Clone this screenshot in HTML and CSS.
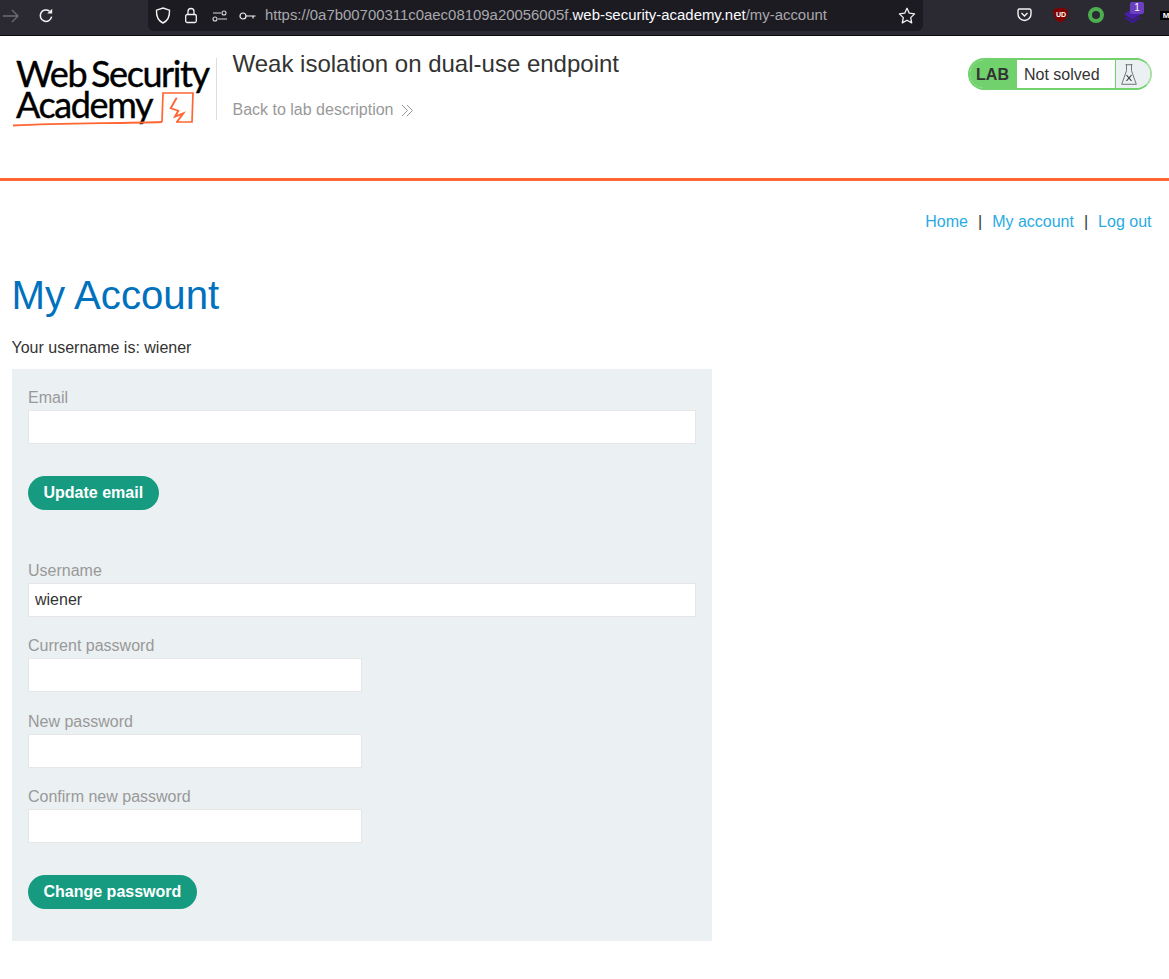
FILE: index.html
```html
<!DOCTYPE html>
<html lang="en">
<head>
<meta charset="utf-8">
<title>Weak isolation on dual-use endpoint</title>
<link rel="stylesheet" href="styles.css">
</head>
<body>
<div class="toolbar">
  <svg class="tb-arrow" width="18" height="14" viewBox="0 0 18 14"><path d="M1 7h15M10 1l6 6-6 6" fill="none" stroke="#6d6c73" stroke-width="1.3"/></svg>
  <svg class="tb-reload" width="16" height="16" viewBox="0 0 16 16"><path d="M13.6 8.6A5.7 5.7 0 1 1 11.5 3.2" fill="none" stroke="#f4f4f5" stroke-width="1.5"/><path d="M9.2 5.6h5V.8z" fill="#f4f4f5"/></svg>
  <div class="urlbar">
    <svg class="u-shield" width="16" height="17" viewBox="0 0 16 17"><path d="M8 1l6.5 2.2c.3 6-1.600 10.500-6.500 12.800C3.100 13.700 1.200 9.200 1.500 3.200z" fill="none" stroke="#f4f4f5" stroke-width="1.400"/></svg>
    <svg class="u-lock" width="14" height="17" viewBox="0 0 14 17"><rect x="1.700" y="7.500" width="10.600" height="8" rx="1.500" fill="none" stroke="#f4f4f5" stroke-width="1.300"/><path d="M4 7.500V4.500a3 3 0 0 1 6 0v3" fill="none" stroke="#f4f4f5" stroke-width="1.300"/></svg>
    <svg class="u-perm" width="16" height="12" viewBox="0 0 16 12"><path d="M1 3h8M6 9h9" stroke="#d8d8da" stroke-width="1.100"/><circle cx="12" cy="3" r="2" fill="none" stroke="#d8d8da" stroke-width="1.100"/><circle cx="3" cy="9" r="2" fill="none" stroke="#d8d8da" stroke-width="1.100"/></svg>
    <svg class="u-key" width="17" height="10" viewBox="0 0 17 10"><circle cx="4" cy="5" r="3" fill="none" stroke="#f4f4f5" stroke-width="1.200"/><path d="M7 5h9.500M14 5v2.500" stroke="#f4f4f5" stroke-width="1.200" fill="none"/></svg>
    <span class="url">https://0a7b00700311c0aec08109a20056005f.<b>web-security-academy.net</b>/my-account</span>
    <svg class="u-star" width="18" height="17" viewBox="0 0 18 17"><path d="M9 1.300l2.300 4.900 5.300.7-3.900 3.700 1 5.300L9 13.300l-4.700 2.600 1-5.300L1.400 6.900l5.300-.7z" fill="none" stroke="#f4f4f5" stroke-width="1.300" stroke-linejoin="round"/></svg>
  </div>
  <div class="extensions">
    <svg class="e-pocket" width="15" height="14" viewBox="0 0 15 14"><path d="M1 2.500a1.500 1.500 0 0 1 1.500-1.500h10a1.500 1.500 0 0 1 1.500 1.500V6a6.500 6.500 0 0 1-13 0z" fill="none" stroke="#f4f4f5" stroke-width="1.400"/><path d="M4.500 5l3 3 3-3" fill="none" stroke="#f4f4f5" stroke-width="1.400"/></svg>
    <span class="e-ublock">
      <svg width="15" height="16" viewBox="0 0 15 16"><path d="M7.500.5l7 2c.3 6.500-2 11-7 13-5-2-7.300-6.500-7-13z" fill="#800000"/></svg>
      <span class="e-ublock-text">UD</span>
    </span>
    <svg class="e-ring" width="16" height="16" viewBox="0 0 16 16"><circle cx="8" cy="8" r="6" fill="none" stroke="#4cae4f" stroke-width="4"/></svg>
    <span class="e-stack">
      <svg width="17" height="15" viewBox="0 0 17 15"><path d="M8.500 0l8.500 5.300-8.500 5.300L0 5.300z" fill="#4a1fa8"/><path d="M0 9l8.500 5.500L17 9l-2.200-1.400-6.300 4L2.200 7.600z" fill="#3d1a90"/></svg>
      <span class="e-badge">1</span>
    </span>
    <span class="e-black">M</span>
  </div>
</div>

<header class="lab-header">
  <div class="logo">
    <span class="logo-line">Web Security</span>
    <span class="logo-line">Academy</span>
    <svg class="logo-art" width="182" height="36" viewBox="0 0 182 36"><path d="M0 34.500C50 32 100 32.500 149 31" fill="none" stroke="#ff6633" stroke-width="1.800"/><path d="M149 31l1-29h30l-1 29h-16" fill="none" stroke="#ff6633" stroke-width="1.700"/><path d="M163.700 6.700l-6 10.600 7.600 2.400-3.300 6 8.300-3.400-6.600 9" fill="none" stroke="#ff6633" stroke-width="1.900"/></svg>
  </div>
  <div class="lab-title">
    <h2 class="lab-name">Weak isolation on dual-use endpoint</h2>
    <a class="back-link">Back to lab description
      <svg width="13" height="13" viewBox="0 0 13 13"><path d="M1 1l5.500 5.500L1 12M6 1l5.500 5.500L6 12" fill="none" stroke="#999" stroke-width="1"/></svg>
    </a>
  </div>
  <div class="lab-status">
    <span class="lab-tag">LAB</span>
    <span class="lab-state">Not solved</span>
    <span class="lab-icon">
      <svg width="16" height="21" viewBox="0 0 16 21"><path d="M4.500 .7h7M5.500 .7v6L.7 20.300h14.600L10.500 6.700v-6" fill="none" stroke="#666" stroke-width=".9"/><path d="M5.500 11l5 6M10.500 11l-5 6" stroke="#333" stroke-width="1.100"/></svg>
    </span>
  </div>
</header>

<nav class="top-links">
  <a>Home</a><span class="sep">|</span><a>My account</a><span class="sep">|</span><a>Log out</a>
</nav>

<main class="content">
  <h1 class="page-title">My Account</h1>
  <p class="user-line">Your username is: wiener</p>
  <div class="panel">
    <form class="form form-email">
      <label class="field-label">Email</label>
      <input class="input" type="text">
      <button class="btn" type="button">Update email</button>
    </form>
    <form class="form form-password">
      <label class="field-label">Username</label>
      <input class="input" type="text" value="wiener">
      <label class="field-label">Current password</label>
      <input class="input input-half" type="text">
      <label class="field-label">New password</label>
      <input class="input input-half" type="text">
      <label class="field-label">Confirm new password</label>
      <input class="input input-half" type="text">
      <button class="btn" type="button">Change password</button>
    </form>
  </div>
</main>
</body>
</html>
```
FILE: styles.css
```css
* { box-sizing: border-box; }
html, body { margin: 0; padding: 0; }
body {
  background: #fff;
  color: #333332;
  font-family: "Liberation Sans", Arial, sans-serif;
  font-size: 16px;
  line-height: 1.4;
  height: 979px;
  overflow: hidden;
}

/* browser toolbar */
.toolbar {
  height: 36px;
  background: #2b2a33;
  border-bottom: 1px solid #0c0c0d;
  display: flex;
  align-items: flex-start;
  position: relative;
}
.tb-arrow { margin: 9px 0 0 2px; flex: none; }
.tb-reload { margin: 8px 0 0 18px; flex: none; }
.urlbar {
  margin-left: 94px;
  width: 775px;
  height: 31px;
  background: #1c1b22;
  border-radius: 0 0 6px 6px;
  display: flex;
  align-items: center;
  flex: none;
  padding: 0 7px 0 7px;
}
.u-shield { flex: none; margin-right: 13px; }
.u-lock { flex: none; margin-right: 14px; }
.u-perm { flex: none; margin-right: 11px; }
.u-key { flex: none; margin-right: 9px; }
.url {
  font-size: 14.930px;
  color: #a8a8ac;
  white-space: nowrap;
  flex: 1;
}
.url b { color: #fbfbfe; font-weight: 400; }
.u-star { flex: none; }
.extensions {
  display: flex;
  align-items: flex-start;
  flex: 1;
  position: relative;
  min-width: 0;
}
.e-pocket { flex: none; margin: 8px 0 0 94px; }
.e-ublock { position: relative; flex: none; margin: 7px 0 0 21px; width: 15px; height: 16px; }
.e-ublock svg { display: block; }
.e-ublock-text {
  position: absolute; left: 3px; top: 4px;
  font-size: 7px; line-height: 8px; font-weight: 700; color: #fff;
}
.e-ring { flex: none; margin: 7px 0 0 20px; }
.e-stack { position: relative; flex: none; margin: 9px 0 0 20px; width: 17px; height: 15px; }
.e-stack svg { display: block; }
.e-badge {
  position: absolute; left: 6px; top: -7px;
  width: 14px; height: 12px;
  background: #6b3fc0; border-radius: 2px;
  color: #fff; font-size: 10px; line-height: 12px; text-align: center;
}
.e-black {
  flex: none; margin: 11px 0 0 19px;
  background: #000; color: #fff;
  width: 12px; height: 9px;
  font-size: 8px; line-height: 9px; font-weight: 700; text-align: center;
}

/* lab header */
.lab-header {
  height: 145px;
  border-bottom: 3px solid #ff6633;
  display: flex;
  align-items: flex-start;
  padding-right: 17px;
}
.logo {
  position: relative;
  width: 217px;
  height: 62px;
  margin-top: 22px;
  padding: 0 0 0 16px;
  border-right: 1px solid #ddd;
  flex: none;
  color: #000;
  font-family: "Lato", "Liberation Sans", sans-serif;
  font-weight: 400;
  font-size: 36px;
  line-height: 31px;
  letter-spacing: -1.400px;
  word-spacing: -3px;
  -webkit-text-stroke: 0.4px #000;
}
.logo-line { display: block; white-space: nowrap; }
.logo-art { position: absolute; left: 13px; top: 33px; overflow: visible; }
.lab-title { flex: 1; padding: 10px 0 0 15.500px; }
.lab-name {
  margin: 0;
  font-size: 24px;
  font-weight: 400;
  line-height: 36px;
  color: #333332;
}
.back-link {
  display: flex;
  align-items: center;
  gap: 8px;
  margin-top: 17px;
  color: #999;
  line-height: 22px;
}
.lab-status {
  display: flex;
  width: 184px;
  height: 32px;
  margin-top: 22px;
  border: 2px solid #70d16d;
  border-right-color: #a5e0a3;
  border-radius: 16px;
  overflow: hidden;
  flex: none;
}
.lab-tag {
  width: 47px;
  padding-right: 2px;
  background: #70d16d;
  color: #333332;
  font-weight: 700;
  text-align: center;
  line-height: 29px;
  flex: none;
}
.lab-state {
  width: 98px;
  padding-left: 7px;
  background: #fff;
  line-height: 29px;
  flex: none;
}
.lab-icon {
  flex: 1;
  background: #ebf0f2;
  border-left: 1px solid #70d16d;
  display: flex;
  align-items: center;
  justify-content: center;
  padding-right: 11px;
  padding-left: 2px;
}

/* nav */
.top-links {
  display: flex;
  justify-content: flex-end;
  gap: 10px;
  padding: 30px 17.500px 0 0;
  line-height: 22px;
}
.top-links a { color: #29abe2; }

/* content */
.content { padding: 0 12px; }
.page-title {
  margin: 35px 0 0 -0.500px;
  font-size: 40.200px;
  font-weight: 400;
  line-height: 56px;
  color: #0071bc;
}
.user-line { margin: 13px 0 0 -0.500px; line-height: 22px; }
.panel {
  width: 700px;
  height: 572px;
  margin-top: 10px;
  background: #ebf0f2;
  padding: 17px 16px 16px;
}
.form { display: flex; flex-direction: column; align-items: flex-start; }
.form-password { margin-top: 49px; }
.field-label { color: #999; line-height: 24px; }
.input {
  display: block;
  width: 668px;
  height: 34px;
  margin: 0 0 17.330px;
  padding: 1px 6px 0;
  background: #fff;
  border: 1px solid #e6e6e6;
  font: inherit;
  color: #333332;
  outline: 0;
}
.input-half { width: 334px; }
.btn {
  height: 34px;
  margin-top: 14.670px;
  padding: 1px 15.500px 0;
  border: 0;
  border-radius: 17px;
  background: #169b80;
  color: #fff;
  font: 700 16px "Liberation Sans", Arial, sans-serif;
}
```
